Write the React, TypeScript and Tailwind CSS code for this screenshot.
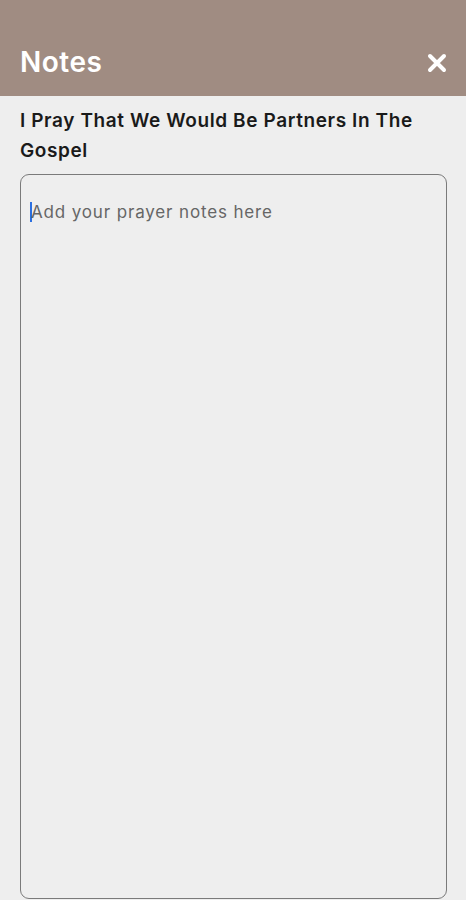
import React from "react";

export default function App() {
  return (
    <div className="w-[466px] h-[900px] bg-[#eeeeee] flex flex-col overflow-hidden" style={{ fontFamily: "Inter, 'Open Sans', sans-serif" }}>
      <div className="h-[96px] bg-[#a08c82] flex items-end justify-between px-5 pb-[20px] shrink-0">
        <span className="text-white font-semibold text-[28px] leading-none tracking-[0.5px]">Notes</span>
        <svg width="20" height="20" viewBox="0 0 20 20" className="mb-[3px] mr-[-1px]">
          <path d="M3 3 L17 17 M17 3 L3 17" stroke="white" strokeWidth="4" strokeLinecap="round" />
        </svg>
      </div>
      <div className="flex-1 flex flex-col pl-5 pr-[19px] pt-[10px] pb-[1px] min-h-0">
        <h2 className="text-[19px] leading-[30px] font-semibold text-[#1a1a1a] tracking-[0.6px]">
          I Pray That We Would Be Partners In The Gospel
        </h2>
        <div className="mt-[8px] flex-1 border border-[#7a7a7a] rounded-[9px] px-[9px] pt-[27px] relative">
          <div className="flex items-center text-[17px] text-[#666] leading-none tracking-[0.85px]">
            <span className="w-[2px] h-[20px] bg-[#2b6fe0] mr-[-1px]"></span>
            <span>Add your prayer notes here</span>
          </div>
        </div>
      </div>
    </div>
  );
}
